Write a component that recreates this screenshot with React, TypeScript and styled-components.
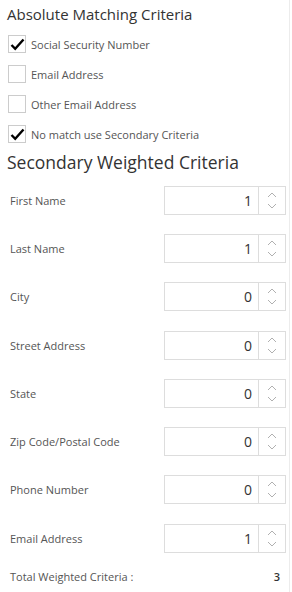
import React from 'react';
import styled, { createGlobalStyle } from 'styled-components';

const GlobalStyle = createGlobalStyle`
  body {
    margin: 0;
    background: #ffffff;
    font-family: 'Open Sans', 'Liberation Sans', sans-serif;
  }
`;

const Panel = styled.div`
  width: 290px;
  height: 592px;
  box-sizing: border-box;
  border-right: 1px solid #ececec;
  padding: 4px 0 0 7px;
`;

const Heading = styled.div<{ $size: number; $line: number }>`
  font-size: ${(p) => p.$size}px;
  line-height: ${(p) => p.$line}px;
  color: #333333;
`;

const CheckList = styled.div`
  display: flex;
  flex-direction: column;
  padding: 5px 0 1px 1px;
`;

const CheckRow = styled.label`
  display: flex;
  align-items: center;
  height: 30px;
  gap: 5px;
  font-size: 11px;
  color: #555555;
`;

const Box = styled.span`
  width: 16px;
  height: 16px;
  border: 1px solid #cccccc;
  display: flex;
  align-items: center;
  justify-content: center;
`;

const FieldList = styled.div`
  display: flex;
  flex-direction: column;
  padding-top: 2px;
  padding-right: 3px;
`;

const FieldRow = styled.div`
  display: flex;
  align-items: center;
  justify-content: space-between;
  height: 48.3px;
  font-size: 11px;
  color: #555555;
  padding-left: 3px;
`;

const Spinner = styled.div`
  display: flex;
  width: 122px;
  height: 29px;
  box-sizing: border-box;
  border: 1px solid #dddddd;
`;

const Value = styled.div`
  flex: 1;
  display: flex;
  align-items: center;
  justify-content: flex-end;
  padding-right: 6px;
  font-size: 14px;
  color: #333333;
  border-right: 1px solid #dddddd;
`;

const Arrows = styled.div`
  width: 26px;
  display: flex;
  flex-direction: column;
  align-items: center;
  justify-content: center;
  gap: 5px;
`;

const TotalRow = styled(FieldRow)`
  height: 28px;
  padding-right: 6px;
`;

const TotalValue = styled.span`
  font-weight: 600;
  color: #333333;
`;

const Check = () => (
  <svg width="15" height="13" viewBox="0 0 15 13">
    <path d="M1.5 7 L5.2 10.8 L13.5 1.5" fill="none" stroke="#000" strokeWidth="2.4" />
  </svg>
);

const Chevron = ({ up }: { up?: boolean }) => (
  <svg width="10" height="6" viewBox="0 0 10 6">
    <path
      d={up ? 'M1 5 L5 1 L9 5' : 'M1 1 L5 5 L9 1'}
      fill="none"
      stroke="#b0b0b0"
      strokeWidth="1"
    />
  </svg>
);

const checks = [
  { label: 'Social Security Number', on: true },
  { label: 'Email Address', on: false },
  { label: 'Other Email Address', on: false },
  { label: 'No match use Secondary Criteria', on: true },
];

const fields = [
  { label: 'First Name', value: 1 },
  { label: 'Last Name', value: 1 },
  { label: 'City', value: 0 },
  { label: 'Street Address', value: 0 },
  { label: 'State', value: 0 },
  { label: 'Zip Code/Postal Code', value: 0 },
  { label: 'Phone Number', value: 0 },
  { label: 'Email Address', value: 1 },
];

const App: React.FC = () => {
  const total = fields.reduce((sum, f) => sum + f.value, 0);

  return (
    <>
      <GlobalStyle />
      <Panel>
        <Heading $size={15} $line={20}>
          Absolute Matching Criteria
        </Heading>
        <CheckList>
          {checks.map((c) => (
            <CheckRow key={c.label}>
              <Box>{c.on && <Check />}</Box>
              {c.label}
            </CheckRow>
          ))}
        </CheckList>
        <Heading $size={17.5} $line={24}>
          Secondary Weighted Criteria
        </Heading>
        <FieldList>
          {fields.map((f) => (
            <FieldRow key={f.label}>
              {f.label}
              <Spinner>
                <Value>{f.value}</Value>
                <Arrows>
                  <Chevron up />
                  <Chevron />
                </Arrows>
              </Spinner>
            </FieldRow>
          ))}
          <TotalRow>
            Total Weighted Criteria :<TotalValue>{total}</TotalValue>
          </TotalRow>
        </FieldList>
      </Panel>
    </>
  );
};

export default App;
